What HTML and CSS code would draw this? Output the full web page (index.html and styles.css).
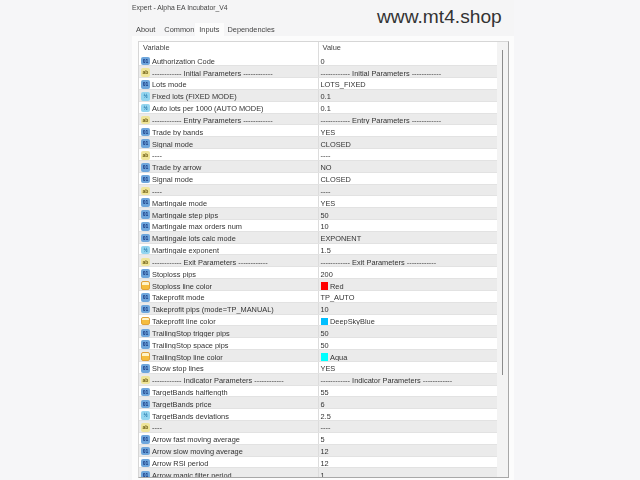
FILE: index.html
```html
<!DOCTYPE html>
<html lang="en">
<head>
<meta charset="utf-8">
<title>Expert - Alpha EA Incubator_V4</title>
<link rel="stylesheet" href="styles.css">
</head>
<body>
<div class="dialog">
  <div class="title">Expert - Alpha EA Incubator_V4</div>
  <div class="watermark">www.mt4.shop</div>
  <div class="tabs">
    <span class="tab">About</span>
    <span class="tab">Common</span>
    <span class="tab active">Inputs</span>
    <span class="tab">Dependencies</span>
  </div>
  <div class="panel">
    <div class="frame">
      <div class="list">
        <div class="head"><span class="c1">Variable</span><span class="c2">Value</span></div>
        <div class="row"><i class="ic int">01</i><span class="c1 t">Authorization Code</span><span class="c2">0</span></div>
        <div class="row"><i class="ic str">ab</i><span class="c1 t">------------ Initial Parameters ------------</span><span class="c2">------------ Initial Parameters ------------</span></div>
        <div class="row"><i class="ic int">01</i><span class="c1 t">Lots mode</span><span class="c2">LOTS_FIXED</span></div>
        <div class="row"><i class="ic dbl">½</i><span class="c1 t">Fixed lots (FIXED MODE)</span><span class="c2">0.1</span></div>
        <div class="row"><i class="ic dbl">½</i><span class="c1 t">Auto lots per 1000 (AUTO MODE)</span><span class="c2">0.1</span></div>
        <div class="row"><i class="ic str">ab</i><span class="c1 t">------------ Entry Parameters ------------</span><span class="c2">------------ Entry Parameters ------------</span></div>
        <div class="row"><i class="ic int">01</i><span class="c1 t">Trade by bands</span><span class="c2">YES</span></div>
        <div class="row"><i class="ic int">01</i><span class="c1 t">Signal mode</span><span class="c2">CLOSED</span></div>
        <div class="row"><i class="ic str">ab</i><span class="c1 t">----</span><span class="c2">----</span></div>
        <div class="row"><i class="ic int">01</i><span class="c1 t">Trade by arrow</span><span class="c2">NO</span></div>
        <div class="row"><i class="ic int">01</i><span class="c1 t">Signal mode</span><span class="c2">CLOSED</span></div>
        <div class="row"><i class="ic str">ab</i><span class="c1 t">----</span><span class="c2">----</span></div>
        <div class="row"><i class="ic int">01</i><span class="c1 t">Martingale mode</span><span class="c2">YES</span></div>
        <div class="row"><i class="ic int">01</i><span class="c1 t">Martingale step pips</span><span class="c2">50</span></div>
        <div class="row"><i class="ic int">01</i><span class="c1 t">Martingale max orders num</span><span class="c2">10</span></div>
        <div class="row"><i class="ic int">01</i><span class="c1 t">Martingale lots calc mode</span><span class="c2">EXPONENT</span></div>
        <div class="row"><i class="ic dbl">½</i><span class="c1 t">Martingale exponent</span><span class="c2">1.5</span></div>
        <div class="row"><i class="ic str">ab</i><span class="c1 t">------------ Exit Parameters ------------</span><span class="c2">------------ Exit Parameters ------------</span></div>
        <div class="row"><i class="ic int">01</i><span class="c1 t">Stoploss pips</span><span class="c2">200</span></div>
        <div class="row"><i class="ic col"></i><span class="c1 t">Stoploss line color</span><span class="c2"><b class="sw red"></b>Red</span></div>
        <div class="row"><i class="ic int">01</i><span class="c1 t">Takeprofit mode</span><span class="c2">TP_AUTO</span></div>
        <div class="row"><i class="ic int">01</i><span class="c1 t">Takeprofit pips (mode=TP_MANUAL)</span><span class="c2">10</span></div>
        <div class="row"><i class="ic col"></i><span class="c1 t">Takeprofit line color</span><span class="c2"><b class="sw sky"></b>DeepSkyBlue</span></div>
        <div class="row"><i class="ic int">01</i><span class="c1 t">TrailingStop trigger pips</span><span class="c2">50</span></div>
        <div class="row"><i class="ic int">01</i><span class="c1 t">TrailingStop space pips</span><span class="c2">50</span></div>
        <div class="row"><i class="ic col"></i><span class="c1 t">TrailingStop line color</span><span class="c2"><b class="sw aqua"></b>Aqua</span></div>
        <div class="row"><i class="ic int">01</i><span class="c1 t">Show stop lines</span><span class="c2">YES</span></div>
        <div class="row"><i class="ic str">ab</i><span class="c1 t">------------ Indicator Parameters ------------</span><span class="c2">------------ Indicator Parameters ------------</span></div>
        <div class="row"><i class="ic int">01</i><span class="c1 t">TargetBands halflength</span><span class="c2">55</span></div>
        <div class="row"><i class="ic int">01</i><span class="c1 t">TargetBands price</span><span class="c2">6</span></div>
        <div class="row"><i class="ic dbl">½</i><span class="c1 t">TargetBands deviations</span><span class="c2">2.5</span></div>
        <div class="row"><i class="ic str">ab</i><span class="c1 t">----</span><span class="c2">----</span></div>
        <div class="row"><i class="ic int">01</i><span class="c1 t">Arrow fast moving average</span><span class="c2">5</span></div>
        <div class="row"><i class="ic int">01</i><span class="c1 t">Arrow slow moving average</span><span class="c2">12</span></div>
        <div class="row"><i class="ic int">01</i><span class="c1 t">Arrow RSI period</span><span class="c2">12</span></div>
        <div class="row"><i class="ic int">01</i><span class="c1 t">Arrow magic filter period</span><span class="c2">1</span></div>
      </div>
      <div class="scrollbar"><div class="thumb"></div></div>
    </div>
  </div>
</div>
</body>
</html>
```
FILE: styles.css
```css
* { box-sizing: border-box; }
html, body { margin: 0; height: 480px; overflow: hidden; background: #f6f6f8; }
body { font-family: "Liberation Sans", Arial, sans-serif; font-size: 7.4px; color: #333; }
.dialog { position: relative; width: 386px; height: 480px; margin-left: 128px; background: #f5f5f6; }
.title { height: 23px; padding: 3.5px 0 0 4px; font-size: 6.8px; line-height: 8px; color: #444; filter: blur(.25px); }
.watermark { position: absolute; left: 249px; top: 5px; font-size: 19.2px; line-height: 24px; color: #333; }
.tabs { display: flex; height: 13px; padding-left: 4.5px; }
.tab { padding: 2px 3.5px 0; line-height: 10px; color: #444; filter: blur(.25px); }
.tab:first-child { margin-right: 2px; }
.tab.active { margin-left: -2.5px; padding: 1.5px 4.5px 0 4px; background: #fcfcfc; }
.panel { height: 444px; margin-left: 4px; padding: 5px 0 0 6px; background: #fcfcfc; }
.frame { display: flex; width: 371px; height: 437px; overflow: hidden; border: 1px solid #d6d6d6; border-right-color: #a8a8a8; border-bottom-color: #a8a8a8; background: #fff; }
.list { width: 358px; filter: blur(.35px); }
.head { display: flex; height: 12.4px; line-height: 12px; color: #444; }
.head .c1 { width: 179px; padding-left: 4px; }
.head .c2 { padding-left: 3.5px; }
.row { display: flex; height: 11.84px; overflow: hidden; border-bottom: 1px solid #e2e2e2; white-space: nowrap; }
.row:nth-child(odd) { background: #ebebeb; }
.c1.t { width: 168px; padding: 3px 0 0 2px; display: flex; align-items: center; }
.c2 { flex: 1; display: flex; align-items: center; padding-left: 1.5px; border-left: 1px solid #dcdcdc; }
.row .c2 { padding-top: 3px; }
.ic { flex: none; align-self: center; width: 9px; height: 8.5px; margin: 2px 0 0 2px; border-radius: 2px; font: 700 5px/8.5px "Liberation Sans", sans-serif; text-align: center; }
.ic.int { background: #6ea6dc; color: #12307a; }
.ic.dbl { background: #93d5ef; color: #1b6fa5; }
.ic.str { background: #efe59a; color: #6b5b10; }
.ic.col { background: linear-gradient(#fff3c8 40%, #f5bd3f 40%); border: 1px solid #e0a23a; }
.sw { flex: none; width: 7.5px; height: 7.5px; margin-right: 2px; }
.sw.red { background: #f00; }
.sw.sky { background: #00bfff; }
.sw.aqua { background: #0ff; }
.scrollbar { flex: 1; padding: 8px 0 0 4.5px; background: #f3f3f3; }
.thumb { width: 1.5px; height: 325px; background: #8a8a8a; }
```
